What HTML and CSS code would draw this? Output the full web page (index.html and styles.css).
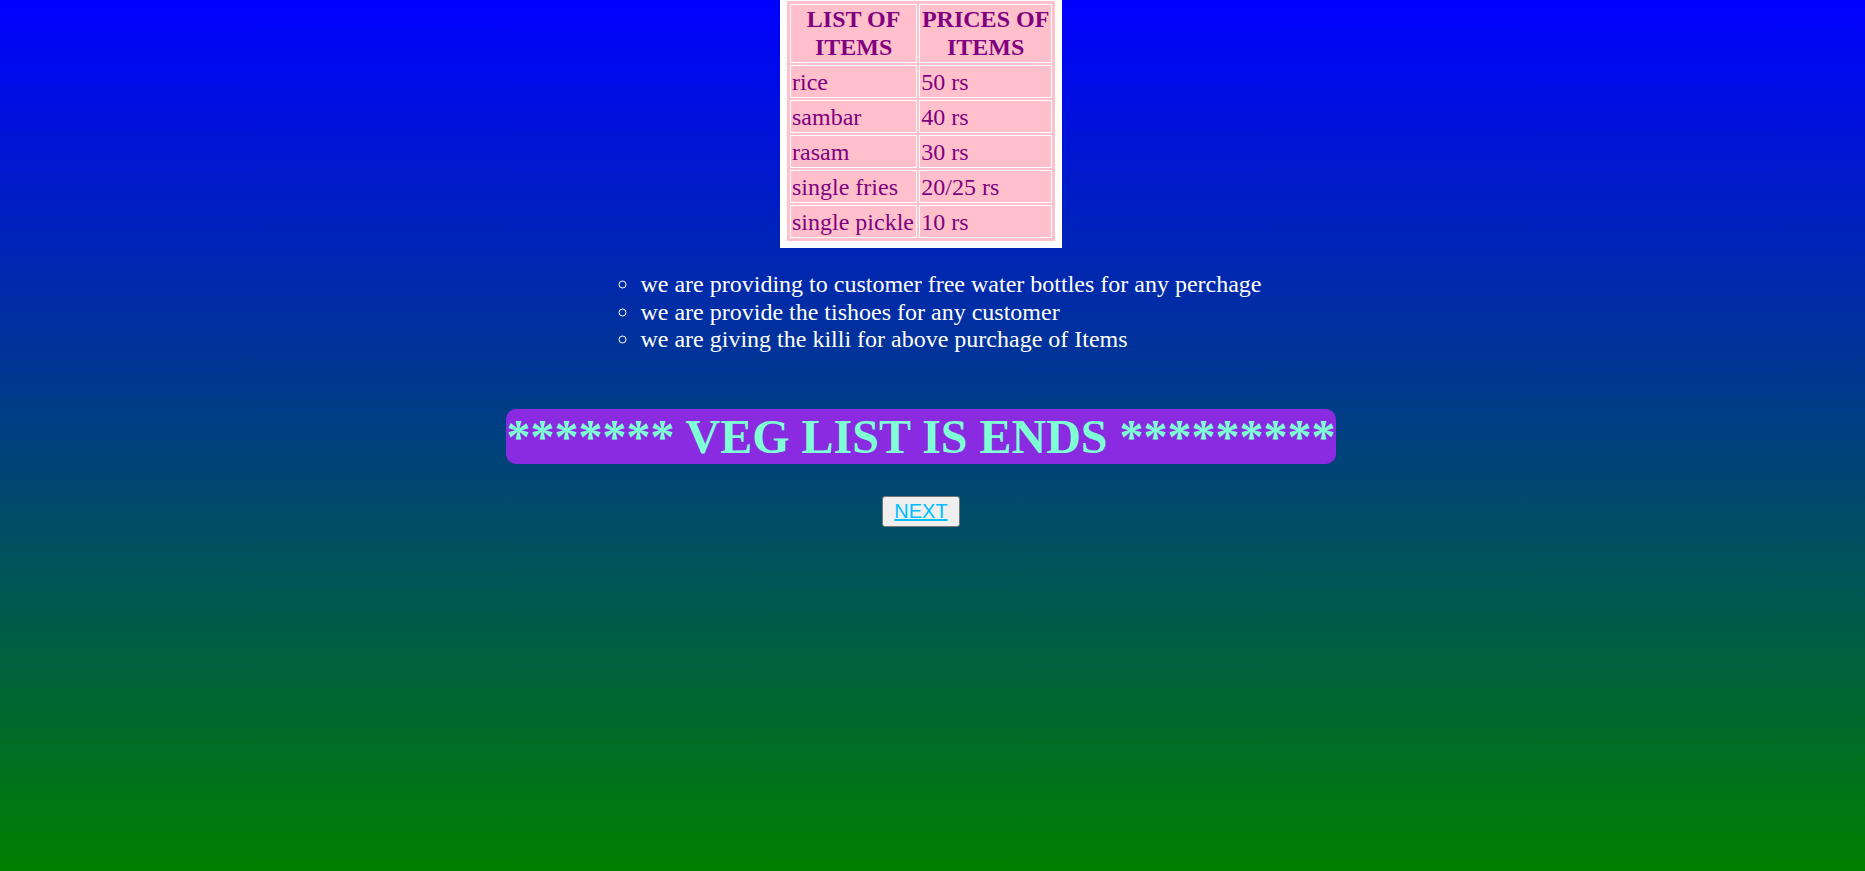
FILE: index.html
```html
<!DOCTYPE html>
<html lang="en">
<head>
<meta charset="utf-8">
<title>Veg List</title>
<link rel="stylesheet" href="styles.css">
</head>
<body>
<div class="page">
  <table class="price-table">
    <tr>
      <th>LIST OF<br>ITEMS</th>
      <th>PRICES OF<br>ITEMS</th>
    </tr>
    <tr><td>rice</td><td>50 rs</td></tr>
    <tr><td>sambar</td><td>40 rs</td></tr>
    <tr><td>rasam</td><td>30 rs</td></tr>
    <tr><td>single fries</td><td>20/25 rs</td></tr>
    <tr><td>single pickle</td><td>10 rs</td></tr>
  </table>

  <ul class="offers">
    <li>we are providing to customer free water bottles for any perchage</li>
    <li>we are provide the tishoes for any customer</li>
    <li>we are giving the killi for above purchage of Items</li>
  </ul>

  <h1 class="banner">******* VEG LIST IS ENDS *********</h1>

  <button class="next-btn" type="button"><a href="#">NEXT</a></button>
</div>
</body>
</html>
```

FILE: styles.css
```css
html, body {
  margin: 0;
  padding: 0;
  height: 100%;
}

body {
  background: linear-gradient(to bottom, #0000ff 0%, #008000 100%);
  font-family: "Liberation Serif", "Times New Roman", serif;
  overflow: hidden;
}

.page {
  width: 1842px;
  display: flex;
  flex-direction: column;
  align-items: center;
}

.price-table {
  width: 282px;
  margin-top: -6px;
  border: 7px solid #ffffff;
  padding: 1px;
  border-spacing: 2px;
  background: #ffc0cb;
  color: #800080;
  font-size: 24px;
}

.price-table th,
.price-table td {
  border: 1px solid #ffffff;
  padding: 1px;
}

.price-table th {
  font-weight: bold;
  text-align: center;
  line-height: 27.5px;
}

.price-table td {
  text-align: left;
  line-height: 29px;
  padding: 2px 1px 0;
  white-space: nowrap;
}

.offers {
  margin: 23px 0 24px 20px;
  padding-left: 40px;
  list-style: circle;
  color: #ffffff;
  font-size: 24px;
  line-height: 27.6px;
}

.banner {
  margin: 31px 0 32px;
  padding: 0;
  font-size: 48px;
  font-weight: bold;
  line-height: 55px;
  color: #7fffd4;
  background: #8a2be2;
  border-radius: 10px;
  white-space: nowrap;
}

.next-btn {
  margin: 0;
  padding: 3px 11px 3px;
  background: #efefef;
  border: 1px solid #767676;
  border-radius: 3px;
  font-family: "Liberation Sans", Arial, sans-serif;
  font-size: 20px;
  line-height: 23px;
}

.next-btn a {
  color: #00bfff;
  text-decoration: underline;
}
```
